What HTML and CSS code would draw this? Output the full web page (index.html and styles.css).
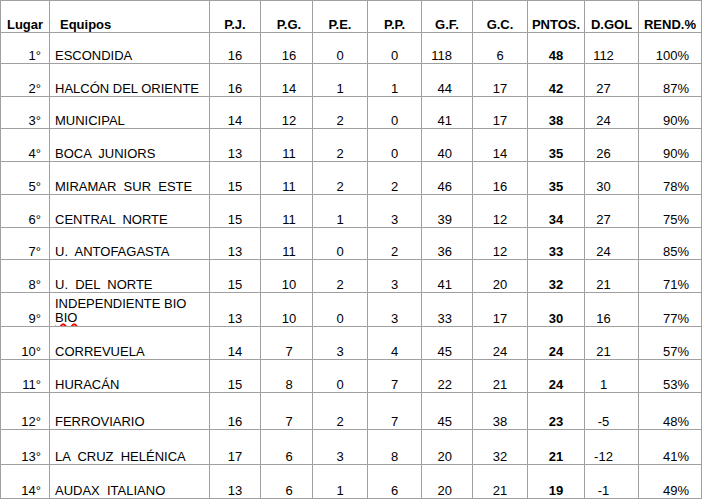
FILE: index.html
```html
<!DOCTYPE html>
<html lang="es">
<head>
<meta charset="utf-8">
<title>Tabla de posiciones</title>
<link rel="stylesheet" href="styles.css">
</head>
<body>
<div class="standings">
  <div class="cell head c1">Lugar</div>
  <div class="cell head c2">Equipos</div>
  <div class="cell head c3">P.J.</div>
  <div class="cell head c4">P.G.</div>
  <div class="cell head c5">P.E.</div>
  <div class="cell head c6">P.P.</div>
  <div class="cell head c7">G.F.</div>
  <div class="cell head c8">G.C.</div>
  <div class="cell head c9">PNTOS.</div>
  <div class="cell head c10">D.GOL</div>
  <div class="cell head c11">REND.%</div>

  <div class="cell c1">1°</div><div class="cell c2">ESCONDIDA</div><div class="cell c3">16</div><div class="cell c4">16</div><div class="cell c5">0</div><div class="cell c6">0</div><div class="cell c7">118</div><div class="cell c8">6</div><div class="cell c9">48</div><div class="cell c10">112</div><div class="cell c11">100%</div>
  <div class="cell c1">2°</div><div class="cell c2">HALCÓN DEL ORIENTE</div><div class="cell c3">16</div><div class="cell c4">14</div><div class="cell c5">1</div><div class="cell c6">1</div><div class="cell c7">44</div><div class="cell c8">17</div><div class="cell c9">42</div><div class="cell c10">27</div><div class="cell c11">87%</div>
  <div class="cell c1">3°</div><div class="cell c2">MUNICIPAL</div><div class="cell c3">14</div><div class="cell c4">12</div><div class="cell c5">2</div><div class="cell c6">0</div><div class="cell c7">41</div><div class="cell c8">17</div><div class="cell c9">38</div><div class="cell c10">24</div><div class="cell c11">90%</div>
  <div class="cell c1">4°</div><div class="cell c2">BOCA  JUNIORS</div><div class="cell c3">13</div><div class="cell c4">11</div><div class="cell c5">2</div><div class="cell c6">0</div><div class="cell c7">40</div><div class="cell c8">14</div><div class="cell c9">35</div><div class="cell c10">26</div><div class="cell c11">90%</div>
  <div class="cell c1">5°</div><div class="cell c2">MIRAMAR  SUR  ESTE</div><div class="cell c3">15</div><div class="cell c4">11</div><div class="cell c5">2</div><div class="cell c6">2</div><div class="cell c7">46</div><div class="cell c8">16</div><div class="cell c9">35</div><div class="cell c10">30</div><div class="cell c11">78%</div>
  <div class="cell c1">6°</div><div class="cell c2">CENTRAL  NORTE</div><div class="cell c3">15</div><div class="cell c4">11</div><div class="cell c5">1</div><div class="cell c6">3</div><div class="cell c7">39</div><div class="cell c8">12</div><div class="cell c9">34</div><div class="cell c10">27</div><div class="cell c11">75%</div>
  <div class="cell c1">7°</div><div class="cell c2">U.  ANTOFAGASTA</div><div class="cell c3">13</div><div class="cell c4">11</div><div class="cell c5">0</div><div class="cell c6">2</div><div class="cell c7">36</div><div class="cell c8">12</div><div class="cell c9">33</div><div class="cell c10">24</div><div class="cell c11">85%</div>
  <div class="cell c1">8°</div><div class="cell c2">U.  DEL  NORTE</div><div class="cell c3">15</div><div class="cell c4">10</div><div class="cell c5">2</div><div class="cell c6">3</div><div class="cell c7">41</div><div class="cell c8">20</div><div class="cell c9">32</div><div class="cell c10">21</div><div class="cell c11">71%</div>
  <div class="cell c1">9°</div><div class="cell c2"><span class="wrap">INDEPENDIENTE BIO<br><span class="spell">BIO</span></span></div><div class="cell c3">13</div><div class="cell c4">10</div><div class="cell c5">0</div><div class="cell c6">3</div><div class="cell c7">33</div><div class="cell c8">17</div><div class="cell c9">30</div><div class="cell c10">16</div><div class="cell c11">77%</div>
  <div class="cell c1">10°</div><div class="cell c2">CORREVUELA</div><div class="cell c3">14</div><div class="cell c4">7</div><div class="cell c5">3</div><div class="cell c6">4</div><div class="cell c7">45</div><div class="cell c8">24</div><div class="cell c9">24</div><div class="cell c10">21</div><div class="cell c11">57%</div>
  <div class="cell c1">11°</div><div class="cell c2">HURACÁN</div><div class="cell c3">15</div><div class="cell c4">8</div><div class="cell c5">0</div><div class="cell c6">7</div><div class="cell c7">22</div><div class="cell c8">21</div><div class="cell c9">24</div><div class="cell c10">1</div><div class="cell c11">53%</div>
  <div class="cell c1">12°</div><div class="cell c2">FERROVIARIO</div><div class="cell c3">16</div><div class="cell c4">7</div><div class="cell c5">2</div><div class="cell c6">7</div><div class="cell c7">45</div><div class="cell c8">38</div><div class="cell c9">23</div><div class="cell c10">-5</div><div class="cell c11">48%</div>
  <div class="cell c1">13°</div><div class="cell c2">LA  CRUZ  HELÉNICA</div><div class="cell c3">17</div><div class="cell c4">6</div><div class="cell c5">3</div><div class="cell c6">8</div><div class="cell c7">20</div><div class="cell c8">32</div><div class="cell c9">21</div><div class="cell c10">-12</div><div class="cell c11">41%</div>
  <div class="cell c1">14°</div><div class="cell c2">AUDAX  ITALIANO</div><div class="cell c3">13</div><div class="cell c4">6</div><div class="cell c5">1</div><div class="cell c6">6</div><div class="cell c7">20</div><div class="cell c8">21</div><div class="cell c9">19</div><div class="cell c10">-1</div><div class="cell c11">49%</div>
</div>
</body>
</html>
```
FILE: styles.css
```css
html, body {
  margin: 0;
  padding: 0;
  background: #ffffff;
}

body {
  font-family: "Liberation Sans", Arial, sans-serif;
  font-size: 13px;
  line-height: 15px;
  color: #000000;
}

.standings {
  display: grid;
  width: 702px;
  box-sizing: border-box;
  grid-template-columns: 48px 159px 50px 51px 54px 53px 50px 54px 56px 53px 62px;
  grid-template-rows: 31px 30px 32px 31px 32px 32px 32px 31px 32px 33px 32px 32px 36px 34px 33px;
  gap: 1px;
  padding: 1px;
  background: #a0a0a0;
}

.cell {
  background: #ffffff;
  display: flex;
  align-items: flex-end;
  justify-content: center;
  white-space: pre;
  overflow: hidden;
}

.head {
  font-weight: bold;
  justify-content: center;
}

.c1 {
  justify-content: flex-end;
  padding-right: 8px;
}

.c2 {
  justify-content: flex-start;
  padding-left: 5px;
}

.head.c1 {
  justify-content: center;
  padding-right: 0;
}

.head.c2 {
  padding-left: 10px;
}

.c4 {
  padding-left: 5px;
}

.c7 {
  justify-content: flex-end;
  padding-right: 20px;
}

.head.c7 {
  justify-content: center;
  padding-right: 0;
}

.c9 {
  font-weight: bold;
}

.c10 {
  padding-right: 16px;
}

.head.c10 {
  padding-right: 0;
}

.c11 {
  justify-content: flex-end;
  padding-right: 12px;
}

.head.c11 {
  justify-content: center;
  padding-right: 0;
  padding-left: 0;
}

.wrap {
  display: block;
  white-space: normal;
  line-height: 14px;
  padding-bottom: 1px;
}

.spell {
  text-decoration: underline wavy #ff0000;
  text-decoration-thickness: 1.5px;
  text-underline-offset: 1px;
}
```
